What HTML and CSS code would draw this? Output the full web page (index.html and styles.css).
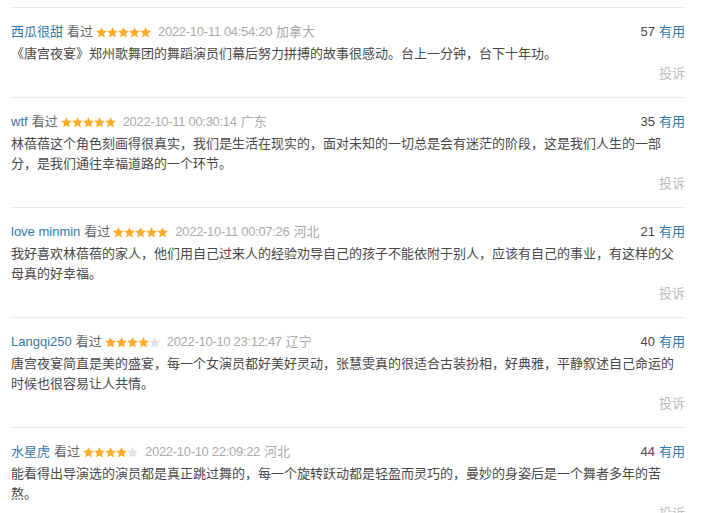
FILE: index.html
```html
<!DOCTYPE html>
<html lang="zh-CN">
<head>
<meta charset="utf-8">
<link rel="stylesheet" href="styles.css">
<title>短评</title>
</head>
<body>
<svg width="0" height="0" class="defs">
  <defs>
    <path id="star" d="M5.5 0 L7.1 3.6 L11 3.9 L8 6.5 L8.9 10.5 L5.5 8.4 L2.1 10.5 L3 6.5 L0 3.9 L3.9 3.6 Z"/>
  </defs>
</svg>
<div class="list">
  <div class="item">
    <div class="head">
      <div class="info">
        <span class="user">西瓜很甜</span><span class="seen">看过</span>
        <svg class="stars" width="55" height="11" viewBox="0 0 55 11"><use href="#star" x="0" fill="#ffac2d"/><use href="#star" x="11" fill="#ffac2d"/><use href="#star" x="22" fill="#ffac2d"/><use href="#star" x="33" fill="#ffac2d"/><use href="#star" x="44" fill="#ffac2d"/></svg>
        <span class="time">2022-10-11 04:54:20</span><span class="loc">加拿大</span>
      </div>
      <div class="votes"><span class="num">57</span><span class="useful">有用</span></div>
    </div>
    <p class="text">《唐宫夜宴》郑州歌舞团的舞蹈演员们幕后努力拼搏的故事很感动。台上一分钟，台下十年功。</p>
    <div class="foot"><span class="report">投诉</span></div>
  </div>
  <div class="item">
    <div class="head">
      <div class="info">
        <span class="user">wtf</span><span class="seen">看过</span>
        <svg class="stars" width="55" height="11" viewBox="0 0 55 11"><use href="#star" x="0" fill="#ffac2d"/><use href="#star" x="11" fill="#ffac2d"/><use href="#star" x="22" fill="#ffac2d"/><use href="#star" x="33" fill="#ffac2d"/><use href="#star" x="44" fill="#ffac2d"/></svg>
        <span class="time">2022-10-11 00:30:14</span><span class="loc">广东</span>
      </div>
      <div class="votes"><span class="num">35</span><span class="useful">有用</span></div>
    </div>
    <p class="text">林蓓蓓这个角色刻画得很真实，我们是生活在现实的，面对未知的一切总是会有迷茫的阶段，这是我们人生的一部分，是我们通往幸福道路的一个环节。</p>
    <div class="foot"><span class="report">投诉</span></div>
  </div>
  <div class="item">
    <div class="head">
      <div class="info">
        <span class="user">love minmin</span><span class="seen">看过</span>
        <svg class="stars" width="55" height="11" viewBox="0 0 55 11"><use href="#star" x="0" fill="#ffac2d"/><use href="#star" x="11" fill="#ffac2d"/><use href="#star" x="22" fill="#ffac2d"/><use href="#star" x="33" fill="#ffac2d"/><use href="#star" x="44" fill="#ffac2d"/></svg>
        <span class="time">2022-10-11 00:07:26</span><span class="loc">河北</span>
      </div>
      <div class="votes"><span class="num">21</span><span class="useful">有用</span></div>
    </div>
    <p class="text">我好喜欢林蓓蓓的家人，他们用自己过来人的经验劝导自己的孩子不能依附于别人，应该有自己的事业，有这样的父母真的好幸福。</p>
    <div class="foot"><span class="report">投诉</span></div>
  </div>
  <div class="item">
    <div class="head">
      <div class="info">
        <span class="user">Langqi250</span><span class="seen">看过</span>
        <svg class="stars" width="55" height="11" viewBox="0 0 55 11"><use href="#star" x="0" fill="#ffac2d"/><use href="#star" x="11" fill="#ffac2d"/><use href="#star" x="22" fill="#ffac2d"/><use href="#star" x="33" fill="#ffac2d"/><use href="#star" x="44" fill="#e3e3e3"/></svg>
        <span class="time">2022-10-10 23:12:47</span><span class="loc">辽宁</span>
      </div>
      <div class="votes"><span class="num">40</span><span class="useful">有用</span></div>
    </div>
    <p class="text">唐宫夜宴简直是美的盛宴，每一个女演员都好美好灵动，张慧雯真的很适合古装扮相，好典雅，平静叙述自己命运的时候也很容易让人共情。</p>
    <div class="foot"><span class="report">投诉</span></div>
  </div>
  <div class="item">
    <div class="head">
      <div class="info">
        <span class="user">水星虎</span><span class="seen">看过</span>
        <svg class="stars" width="55" height="11" viewBox="0 0 55 11"><use href="#star" x="0" fill="#ffac2d"/><use href="#star" x="11" fill="#ffac2d"/><use href="#star" x="22" fill="#ffac2d"/><use href="#star" x="33" fill="#ffac2d"/><use href="#star" x="44" fill="#e3e3e3"/></svg>
        <span class="time">2022-10-10 22:09:22</span><span class="loc">河北</span>
      </div>
      <div class="votes"><span class="num">44</span><span class="useful">有用</span></div>
    </div>
    <p class="text">能看得出导演选的演员都是真正跳过舞的，每一个旋转跃动都是轻盈而灵巧的，曼妙的身姿后是一个舞者多年的苦熬。</p>
    <div class="foot"><span class="report">投诉</span></div>
  </div>
</div>
</body>
</html>
```
FILE: styles.css
```css
html, body {
  margin: 0;
  padding: 0;
  background: #fff;
}
body {
  font-family: "Liberation Sans", Arial, "Noto Sans CJK SC", sans-serif;
  font-size: 13px;
  color: #494949;
}
.defs {
  position: absolute;
  width: 0;
  height: 0;
  overflow: hidden;
}
.list {
  width: 675px;
  margin-left: 10px;
  padding-top: 7px;
}
.item {
  border-top: 1px solid #eaeaea;
  padding: 14px 0 13px 1px;
}
.head {
  display: flex;
  justify-content: space-between;
  align-items: center;
  height: 20px;
  line-height: 20px;
  margin-bottom: 2px;
}
.info {
  display: flex;
  align-items: center;
}
.user {
  color: #3377aa;
}
.seen {
  color: #666;
  margin-left: 4px;
}
.stars {
  margin-left: 3px;
  display: block;
}
.time {
  color: #aaa;
  margin-left: 7px;
  letter-spacing: -0.3px;
}
.loc {
  color: #aaa;
  margin-left: 4px;
}
.votes {
  display: flex;
  align-items: center;
}
.num {
  color: #494949;
}
.useful {
  color: #3377aa;
  margin-left: 4px;
}
.text {
  margin: 0;
  width: 672px;
  line-height: 20px;
  color: #494949;
}
.foot {
  display: flex;
  justify-content: flex-end;
  line-height: 20px;
  height: 20px;
}
.report {
  color: #bbb;
}
```
